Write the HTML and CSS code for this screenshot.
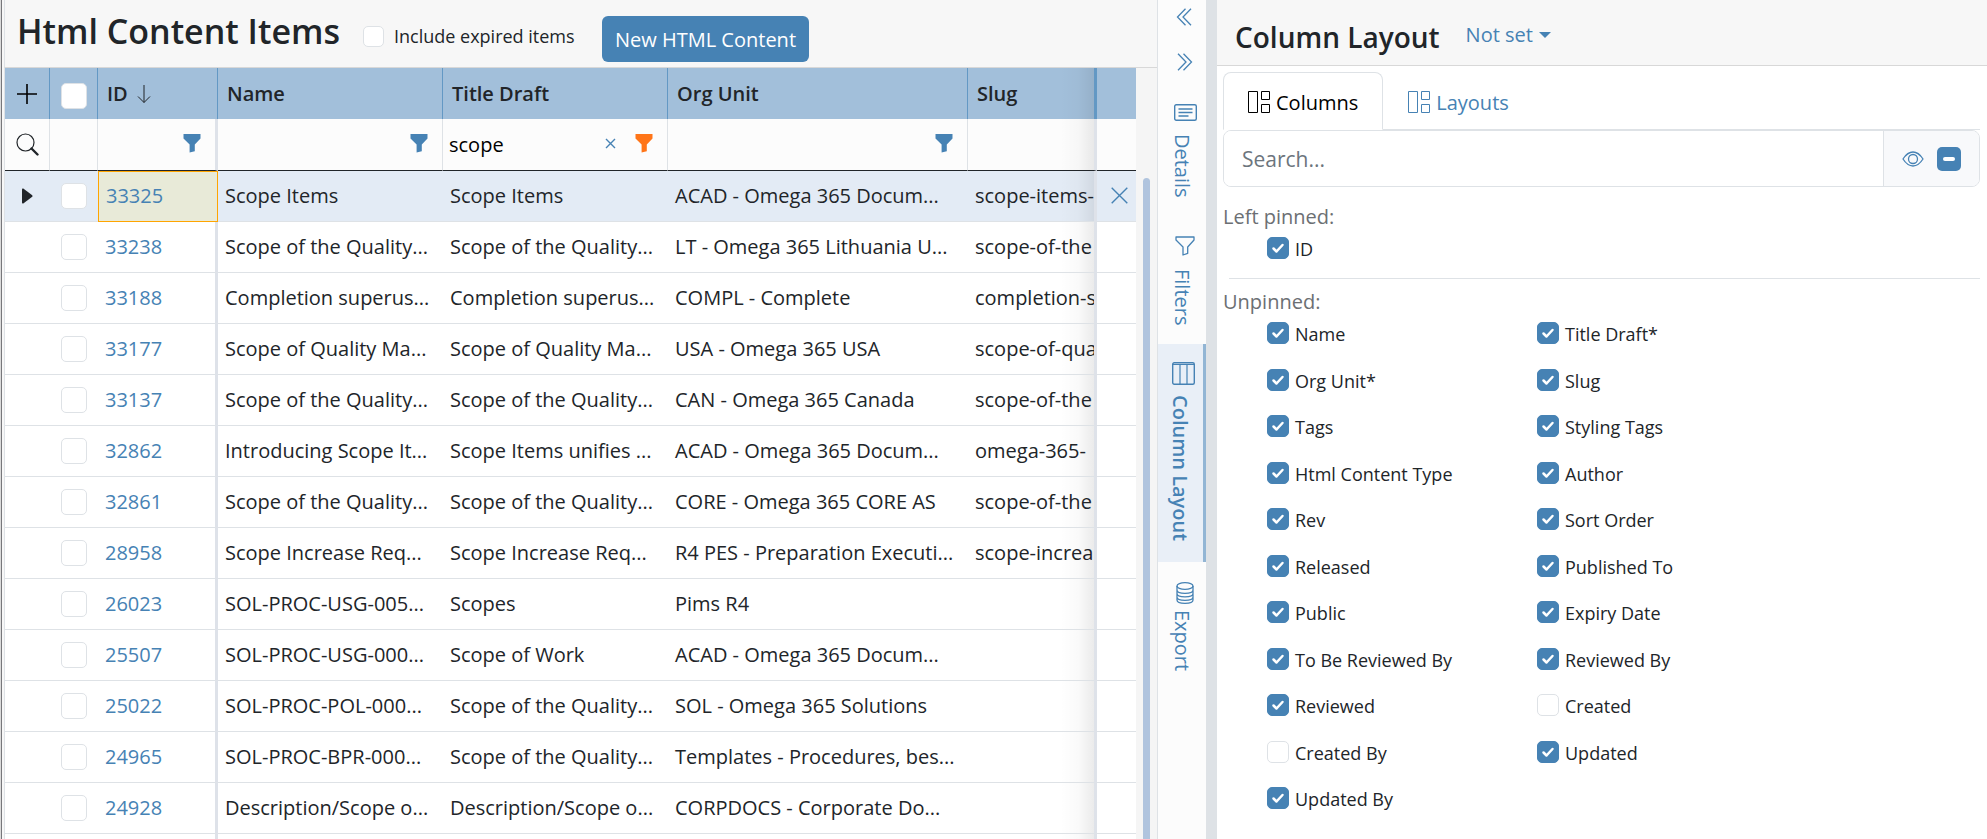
FILE: index.html
```
<!DOCTYPE html>
<html lang="en">
<head>
  <title>Html Content Items</title>
  <meta charset="utf-8">
  <meta name="viewport" content="width=device-width, initial-scale=1.0">
  <link rel="stylesheet" href="styles.css">
</head>
<body>
<svg class="symbols" aria-hidden="true">
  <symbol id="funnel" viewBox="0 0 18 19"><path d="M.5 0h17v4.4L11.8 10.6v6.6L6.600 18.600v-8L.5 4.400z" fill="currentColor"/></symbol>
  <symbol id="layout" viewBox="0 0 22 22"><path d="M.5.5h9v21h-9zM13.500.500h8v8h-8zM13.500 13.500h8v8h-8z" fill="none" stroke="currentColor"/></symbol>
</svg>
<div class="app">
  <main class="content">
    <header class="content-header">
      <h1>Html Content Items</h1>
      <label class="expired"><input type="checkbox" class="check check-sm">Include expired items</label>
      <button type="button" class="btn-new">New HTML Content</button>
    </header>
    <div class="grid">
      <div class="grid-scroll">
        <table>
          <colgroup>
            <col class="col-add"><col class="col-check"><col class="col-id"><col class="col-name"><col class="col-title"><col class="col-org"><col class="col-slug"><col class="col-action">
          </colgroup>
          <thead>
            <tr class="head">
              <th class="center"><button type="button" class="icon" aria-label="Add"><svg width="20" height="20" viewBox="0 0 20 20"><path d="M10 0v20M0 10h20" stroke="#000" stroke-width="1.600"/></svg></button></th>
              <th class="center select-all"><input type="checkbox" class="check" aria-label="Select all"></th>
              <th class="sorted">ID <svg width="14" height="20" viewBox="0 0 14 20"><path d="M7 1v17.500M1 12.500l6 6 6-6" fill="none" stroke="#212529"/></svg></th>
              <th>Name</th>
              <th>Title Draft</th>
              <th>Org Unit</th>
              <th class="slug">Slug</th>
              <th class="action"></th>
            </tr>
            <tr class="filter">
              <td class="center"><button type="button" class="icon" aria-label="Search"><svg width="23" height="23" viewBox="0 0 23 23"><circle cx="9.500" cy="9.500" r="8.500" fill="none" stroke="#212529" stroke-width="1.200"/><path d="M15.500 15.500l6 6" stroke="#212529" stroke-width="2.400" stroke-linecap="round"/></svg></button></td>
              <td></td>
              <td class="pin"><div class="filter-box"><input type="text" aria-label="Filter ID"><button type="button" class="icon" aria-label="ID filter"><svg width="18" height="19"><use href="#funnel"/></svg></button></div></td>
              <td><div class="filter-box"><input type="text" aria-label="Filter Name"><button type="button" class="icon" aria-label="Name filter"><svg width="18" height="19"><use href="#funnel"/></svg></button></div></td>
              <td><div class="filter-box"><input type="text" aria-label="Filter Title Draft" value="scope"><button type="button" class="icon clear" aria-label="Clear"><svg width="11" height="11" viewBox="0 0 11 11"><path d="M1 1l9 9M10 1l-9 9" stroke="currentColor" stroke-width="1.400"/></svg></button><button type="button" class="icon active" aria-label="Title Draft filter"><svg width="18" height="19"><use href="#funnel"/></svg></button></div></td>
              <td><div class="filter-box"><input type="text" aria-label="Filter Org Unit"><button type="button" class="icon" aria-label="Org Unit filter"><svg width="18" height="19"><use href="#funnel"/></svg></button></div></td>
              <td class="slug"></td>
              <td class="action"></td>
            </tr>
          </thead>
          <tbody>
            <tr class="current">
              <td class="center"><svg width="11" height="16" viewBox="0 0 11 16"><path d="M0 1.500Q0 0 1.300.600L10.200 7.200Q11 8 10.200 8.800L1.300 15.400Q0 16 0 14.500z" fill="#212529"/></svg></td>
              <td class="center"><input type="checkbox" class="check" aria-label="Select 33325"></td>
              <td class="pin focused"><a href="#33325">33325</a></td>
              <td>Scope Items</td><td>Scope Items</td><td>ACAD - Omega 365 Docum...</td><td class="slug">scope-items-</td>
              <td class="action"><button type="button" class="icon" aria-label="Delete"><svg width="17" height="17" viewBox="0 0 17 17"><path d="M.7.700l15.600 15.600M16.300.700L.7 16.300" stroke="currentColor" stroke-width="1.400"/></svg></button></td>
            </tr>
            <tr>
              <td></td><td class="center"><input type="checkbox" class="check" aria-label="Select 33238"></td>
              <td class="pin"><a href="#33238">33238</a></td>
              <td>Scope of the Quality...</td><td>Scope of the Quality...</td><td>LT - Omega 365 Lithuania U...</td><td class="slug">scope-of-the</td><td class="action"></td>
            </tr>
            <tr>
              <td></td><td class="center"><input type="checkbox" class="check" aria-label="Select 33188"></td>
              <td class="pin"><a href="#33188">33188</a></td>
              <td>Completion superus...</td><td>Completion superus...</td><td>COMPL - Complete</td><td class="slug">completion-s</td><td class="action"></td>
            </tr>
            <tr>
              <td></td><td class="center"><input type="checkbox" class="check" aria-label="Select 33177"></td>
              <td class="pin"><a href="#33177">33177</a></td>
              <td>Scope of Quality Ma...</td><td>Scope of Quality Ma...</td><td>USA - Omega 365 USA</td><td class="slug">scope-of-qua</td><td class="action"></td>
            </tr>
            <tr>
              <td></td><td class="center"><input type="checkbox" class="check" aria-label="Select 33137"></td>
              <td class="pin"><a href="#33137">33137</a></td>
              <td>Scope of the Quality...</td><td>Scope of the Quality...</td><td>CAN - Omega 365 Canada</td><td class="slug">scope-of-the</td><td class="action"></td>
            </tr>
            <tr>
              <td></td><td class="center"><input type="checkbox" class="check" aria-label="Select 32862"></td>
              <td class="pin"><a href="#32862">32862</a></td>
              <td>Introducing Scope It...</td><td>Scope Items unifies ...</td><td>ACAD - Omega 365 Docum...</td><td class="slug">omega-365-</td><td class="action"></td>
            </tr>
            <tr>
              <td></td><td class="center"><input type="checkbox" class="check" aria-label="Select 32861"></td>
              <td class="pin"><a href="#32861">32861</a></td>
              <td>Scope of the Quality...</td><td>Scope of the Quality...</td><td>CORE - Omega 365 CORE AS</td><td class="slug">scope-of-the</td><td class="action"></td>
            </tr>
            <tr>
              <td></td><td class="center"><input type="checkbox" class="check" aria-label="Select 28958"></td>
              <td class="pin"><a href="#28958">28958</a></td>
              <td>Scope Increase Req...</td><td>Scope Increase Req...</td><td>R4 PES - Preparation Executi...</td><td class="slug">scope-increa</td><td class="action"></td>
            </tr>
            <tr>
              <td></td><td class="center"><input type="checkbox" class="check" aria-label="Select 26023"></td>
              <td class="pin"><a href="#26023">26023</a></td>
              <td>SOL-PROC-USG-005...</td><td>Scopes</td><td>Pims R4</td><td class="slug"></td><td class="action"></td>
            </tr>
            <tr>
              <td></td><td class="center"><input type="checkbox" class="check" aria-label="Select 25507"></td>
              <td class="pin"><a href="#25507">25507</a></td>
              <td>SOL-PROC-USG-000...</td><td>Scope of Work</td><td>ACAD - Omega 365 Docum...</td><td class="slug"></td><td class="action"></td>
            </tr>
            <tr>
              <td></td><td class="center"><input type="checkbox" class="check" aria-label="Select 25022"></td>
              <td class="pin"><a href="#25022">25022</a></td>
              <td>SOL-PROC-POL-000...</td><td>Scope of the Quality...</td><td>SOL - Omega 365 Solutions</td><td class="slug"></td><td class="action"></td>
            </tr>
            <tr>
              <td></td><td class="center"><input type="checkbox" class="check" aria-label="Select 24965"></td>
              <td class="pin"><a href="#24965">24965</a></td>
              <td>SOL-PROC-BPR-000...</td><td>Scope of the Quality...</td><td>Templates - Procedures, bes...</td><td class="slug"></td><td class="action"></td>
            </tr>
            <tr>
              <td></td><td class="center"><input type="checkbox" class="check" aria-label="Select 24928"></td>
              <td class="pin"><a href="#24928">24928</a></td>
              <td>Description/Scope o...</td><td>Description/Scope o...</td><td>CORPDOCS - Corporate Do...</td><td class="slug"></td><td class="action"></td>
            </tr>
            <tr>
              <td></td><td></td><td class="pin"></td><td></td><td></td><td></td><td class="slug"></td><td class="action"></td>
            </tr>
          </tbody>
        </table>
      </div>
      <div class="scrollbar"><div class="thumb"></div></div>
    </div>
  </main>

  <nav class="side-tabs">
    <button type="button" class="chevron" aria-label="Expand"><svg width="16" height="18" viewBox="0 0 16 18"><path d="M9.500.700L1.500 9l8 8.300M15 .700L7 9l8 8.300" fill="none" stroke="currentColor" stroke-width="1.300"/></svg></button>
    <button type="button" class="chevron" aria-label="Collapse"><svg width="16" height="18" viewBox="0 0 16 18"><path d="M1 .700L9 9l-8 8.300M6.500.700l8 8.300-8 8.300" fill="none" stroke="currentColor" stroke-width="1.300"/></svg></button>
    <button type="button" class="side-tab details"><svg width="23" height="17" viewBox="0 0 23 17"><rect x=".7" y=".7" width="21.600" height="15.600" rx="1.500" fill="none" stroke="currentColor" stroke-width="1.400"/><path d="M4.500 5h14M4.500 8.500h14M4.500 12h10" stroke="currentColor" stroke-width="1.300"/></svg>Details</button>
    <button type="button" class="side-tab filters"><svg width="20" height="20" viewBox="0 0 20 20"><path d="M1 1h18v3l-6.300 7v6.300L8 19v-8L1 4z" fill="none" stroke="currentColor" stroke-width="1.300" stroke-linejoin="round"/></svg>Filters</button>
    <button type="button" class="side-tab selected"><svg width="23" height="23" viewBox="0 0 23 23"><rect x=".7" y=".7" width="21.600" height="21.600" rx="1.500" fill="none" stroke="currentColor" stroke-width="1.400"/><path d="M1 2.500h21M8 2.500v20M15 2.500v20" stroke="currentColor" stroke-width="1.200"/></svg>Column Layout</button>
    <button type="button" class="side-tab export"><svg width="18" height="22" viewBox="0 0 18 22"><g fill="none" stroke="currentColor" stroke-width="1.300"><ellipse cx="9" cy="4" rx="8" ry="3.300"/><path d="M1 4v14c0 4.400 16 4.400 16 0V4M1 8c0 4.400 16 4.400 16 0M1 11.500c0 4.400 16 4.400 16 0M1 15c0 4.400 16 4.400 16 0"/></g></svg>Export</button>
  </nav>
  <div class="splitter"></div>

  <aside class="panel">
    <header class="panel-header">
      <h2>Column Layout</h2>
      <button type="button" class="dropdown">Not set</button>
    </header>
    <div class="panel-body">
      <div class="tabs">
        <button type="button" class="tab selected"><svg width="22" height="22"><use href="#layout"/></svg>Columns</button>
        <button type="button" class="tab"><svg width="22" height="22"><use href="#layout"/></svg>Layouts</button>
      </div>
      <div class="search">
        <input type="text" placeholder="Search..." aria-label="Search">
        <div class="search-tools">
          <button type="button" class="icon" aria-label="Show"><svg width="22" height="16" viewBox="0 0 22 16"><g fill="none" stroke="currentColor" stroke-width="1.300"><path d="M1 8Q5.500 1 11 1T21 8Q16.500 15 11 15T1 8z"/><circle cx="11" cy="8" r="4.500"/></g></svg></button>
          <button type="button" class="icon toggle-all" aria-label="Toggle all"></button>
        </div>
      </div>
      <h3 class="group">Left pinned:</h3>
      <div class="columns">
        <label><input type="checkbox" class="check check-col" checked>ID</label>
      </div>
      <hr>
      <h3 class="group">Unpinned:</h3>
      <div class="columns">
        <label><input type="checkbox" class="check check-col" checked>Name</label>
        <label><input type="checkbox" class="check check-col" checked>Title Draft*</label>
        <label><input type="checkbox" class="check check-col" checked>Org Unit*</label>
        <label><input type="checkbox" class="check check-col" checked>Slug</label>
        <label><input type="checkbox" class="check check-col" checked>Tags</label>
        <label><input type="checkbox" class="check check-col" checked>Styling Tags</label>
        <label><input type="checkbox" class="check check-col" checked>Html Content Type</label>
        <label><input type="checkbox" class="check check-col" checked>Author</label>
        <label><input type="checkbox" class="check check-col" checked>Rev</label>
        <label><input type="checkbox" class="check check-col" checked>Sort Order</label>
        <label><input type="checkbox" class="check check-col" checked>Released</label>
        <label><input type="checkbox" class="check check-col" checked>Published To</label>
        <label><input type="checkbox" class="check check-col" checked>Public</label>
        <label><input type="checkbox" class="check check-col" checked>Expiry Date</label>
        <label><input type="checkbox" class="check check-col" checked>To Be Reviewed By</label>
        <label><input type="checkbox" class="check check-col" checked>Reviewed By</label>
        <label><input type="checkbox" class="check check-col" checked>Reviewed</label>
        <label><input type="checkbox" class="check check-col">Created</label>
        <label><input type="checkbox" class="check check-col">Created By</label>
        <label><input type="checkbox" class="check check-col" checked>Updated</label>
        <label><input type="checkbox" class="check check-col" checked>Updated By</label>
      </div>
    </div>
  </aside>
</div>
</body>
</html>
```
FILE: styles.css
```
* {
  box-sizing: border-box;
}

body {
  margin: 0;
  font-family: "Open Sans", "Noto Sans", sans-serif;
  font-size: 20px;
  color: #212529;
  background: #fff;
  overflow: hidden;
}

button,
input {
  font: inherit;
  color: inherit;
}

button {
  padding: 0;
  border: 0;
  background: none;
  color: #4682b4;
  cursor: pointer;
}

a {
  color: #4682b4;
  text-decoration: none;
}

svg {
  display: block;
  flex: none;
}

h1,
h2,
h3 {
  margin: 0;
}

.symbols {
  position: absolute;
  width: 0;
  height: 0;
}

.app {
  display: grid;
  grid-template-columns: minmax(0, 1157fr) 49px 11px minmax(0, 770fr);
  height: 100vh;
}

/* checkboxes */
.check {
  appearance: none;
  display: block;
  flex: none;
  width: 26px;
  height: 26px;
  margin: 0;
  border: 1px solid #dee2e6;
  border-radius: 5px;
  background: #fff;
}

.check-sm {
  width: 21px;
  height: 21px;
}

.check-col {
  width: 22px;
  height: 22px;
}

.check:checked {
  border-color: #4682b4;
  background: #4682b4 url("data:image/svg+xml,%3Csvg xmlns='http://www.w3.org/2000/svg' viewBox='0 0 20 20'%3E%3Cpath d='M5.500 10.500l3 3 6-6.500' fill='none' stroke='%23fff' stroke-width='2.500' stroke-linecap='round' stroke-linejoin='round'/%3E%3C/svg%3E") center / 20px no-repeat;
}

/* content */
.content {
  display: flex;
  flex-direction: column;
  min-height: 0;
  padding-left: 4px;
  background: linear-gradient(90deg, #dadada 1px, #77777b 1px 2px, #f7f7f7 2px 4px, #fff 4px);
}

.content-header {
  display: flex;
  align-items: flex-start;
  height: 68px;
  flex: none;
  padding-left: 12px;
  border-left: 1px solid #dee2e6;
  border-bottom: 1px solid #d8d8d8;
  background: #f7f7f7;
}

h1 {
  width: 346px;
  font-size: 34px;
  line-height: 62px;
  font-weight: 600;
  white-space: nowrap;
}

.expired {
  display: flex;
  align-items: center;
  gap: 10px;
  width: 239px;
  padding-top: 22px;
  font-size: 18px;
  line-height: 28px;
  white-space: nowrap;
}

.btn-new {
  height: 46px;
  margin-top: 16px;
  padding: 0 13px;
  border-radius: 6px;
  background: #4682b4;
  color: #fff;
  font-weight: 500;
  white-space: nowrap;
}

.grid {
  display: flex;
  flex: 1;
  min-height: 0;
  border-left: 1px solid #dee2e6;
}

.grid-scroll {
  flex: 1;
  min-width: 0;
  overflow: hidden;
}

table {
  width: 100%;
  table-layout: fixed;
  border-collapse: separate;
  border-spacing: 0;
}

.col-add { width: 45px; }
.col-check { width: 48px; }
.col-id { width: 120px; }
.col-name,
.col-title { width: 225px; }
.col-org { width: 300px; }
.col-action { width: 39px; }

th,
td {
  height: 51px;
  padding: 0 0 2px 7px;
  overflow: hidden;
  border-bottom: 1px solid #dee2e6;
  text-align: left;
  white-space: nowrap;
}

th {
  padding: 0 0 0 9px;
  border-right: 1px solid #6398c4;
  border-bottom: 0;
  background: #a2bfda;
  font-weight: 600;
}

.sorted svg {
  display: inline-block;
  margin-left: 4px;
  vertical-align: -3px;
}

td.center,
th.center {
  padding: 0;
}

.center > * {
  margin: 0 auto;
}

th.select-all {
  padding-top: 4px;
}

.filter td {
  height: 52px;
  padding-left: 6px;
  border-right: 1px solid #dee2e6;
  border-bottom: 1px solid #212529;
  background: #fcfcfc;
}

.filter td.center {
  padding: 0;
}

.filter-box {
  display: flex;
  align-items: center;
  padding-right: 14px;
}

.filter-box input {
  flex: 1;
  min-width: 0;
  padding: 2px 0 0;
  border: 0;
  outline: 0;
  background: none;
  color: #000;
}

.filter-box .clear {
  margin-right: 19px;
}

.filter-box .active {
  color: #ff7518;
}

.icon {
  display: block;
}

td.pin,
.filter td.pin {
  border-right: 3px solid #dee2e9;
}

.current td {
  background: #e3ebf5;
}

.current td.focused {
  border: 1px solid #ffa500;
  background: #e8ead8;
}

/* shadow of the right pinned column */
.slug {
  --shadow: linear-gradient(90deg, transparent calc(100% - 34px), rgba(0, 0, 0, .02) calc(100% - 16px), rgba(0, 0, 0, .08));
  background: var(--shadow);
}

td.slug,
th.slug,
.filter td.slug {
  border-right: 3px solid #dee2e9;
}

th.slug {
  border-right-color: #6398c4;
  background: var(--shadow), #a2bfda;
}

.filter td.slug {
  background: var(--shadow), #fcfcfc;
}

.current td.slug {
  background: var(--shadow), #e3ebf5;
}

th.action,
td.action,
.filter td.action {
  padding-left: 14px;
  border-right: 0;
}

.scrollbar {
  flex: none;
  width: 21px;
  padding: 110px 7px 0;
  background: #f5f5f5;
}

.thumb {
  height: 100%;
  border-radius: 4px 4px 0 0;
  background: #b0c4de;
}

/* vertical tabs */
.side-tabs {
  display: flex;
  flex-direction: column;
  border-left: 1px solid #dee2e6;
  background: #fcfcfc;
}

.chevron {
  display: flex;
  justify-content: center;
  align-items: center;
  height: 45px;
  flex: none;
  padding-left: 6px;
}

.chevron:first-child {
  height: 39px;
  padding-right: 3px;
  padding-bottom: 6px;
}

.side-tab {
  display: flex;
  align-items: center;
  gap: 13px;
  flex: none;
  padding: 20px 0;
  writing-mode: vertical-rl;
  line-height: 48px;
  white-space: nowrap;
}

.side-tab svg {
  margin-left: 6px;
}

.side-tab.selected {
  height: 218px;
  gap: 10px;
  padding: 18px 0;
  border-right: 3px solid #92b5d4;
  background: #e9eff7;
  font-weight: 600;
  line-height: 45px;
}

.side-tab.details { height: 132px; }
.side-tab.filters { height: 128px; }

.side-tab.export {
  gap: 6px;
}

.splitter {
  background: #dee2e6;
}

/* column layout panel */
.panel-header {
  display: flex;
  align-items: flex-start;
  gap: 26px;
  height: 66px;
  padding-left: 18px;
  border-bottom: 1px solid #d8d8d8;
  background: #f7f7f7;
  white-space: nowrap;
}

h2 {
  font-size: 28px;
  line-height: 74px;
  font-weight: 600;
}

.dropdown {
  display: flex;
  align-items: center;
  gap: 6px;
  line-height: 70px;
}

.dropdown::after {
  content: "";
  border: 6px solid transparent;
  border-top-color: #4682b4;
  border-bottom: 0;
}

.panel-body {
  padding: 6px 7px 0 6px;
}

.tabs {
  display: flex;
  border-bottom: 1px solid #dee2e6;
}

.tab {
  display: flex;
  align-items: center;
  gap: 6px;
  height: 58px;
  margin-bottom: -1px;
  padding: 2px 24px 0;
  border: 1px solid transparent;
}

.tab.selected {
  border-color: #dee2e6;
  border-bottom-color: #fff;
  border-radius: 8px 8px 0 0;
  background: #fff;
  color: #000;
}

.search {
  display: flex;
  height: 57px;
  overflow: hidden;
  border: 1px solid #dee2e6;
  border-radius: 8px;
}

.search input {
  flex: 1;
  min-width: 0;
  padding: 0 18px;
  border: 0;
  outline: 0;
  font-size: 21px;
}

.search input::placeholder {
  color: #6c757d;
}

.search-tools {
  display: flex;
  align-items: center;
  gap: 13px;
  width: 96px;
  padding-left: 18px;
  border-left: 1px solid #dee2e6;
  background: #f8f9fb;
}

.toggle-all {
  width: 24px;
  height: 24px;
  padding: 0 6px;
  border-radius: 5px;
  background: #4682b4;
}

.toggle-all::before {
  content: "";
  display: block;
  height: 4px;
  border-radius: 2px;
  background: #fff;
}

.group {
  padding-top: 16px;
  color: #6c6f73;
  font-size: 20px;
  line-height: 28px;
  font-weight: 400;
}

.columns {
  display: grid;
  grid-template-columns: 270px 270px;
  grid-auto-rows: 47px 46px;
  padding-left: 44px;
}

.columns label {
  display: flex;
  align-items: flex-start;
  gap: 6px;
  padding-top: 6px;
  font-size: 18px;
  line-height: 25px;
}

hr {
  margin: 0 0 0 6px;
  border: 0;
  border-top: 1px solid #dee2e6;
}

hr + .group {
  padding-top: 9px;
}
```
